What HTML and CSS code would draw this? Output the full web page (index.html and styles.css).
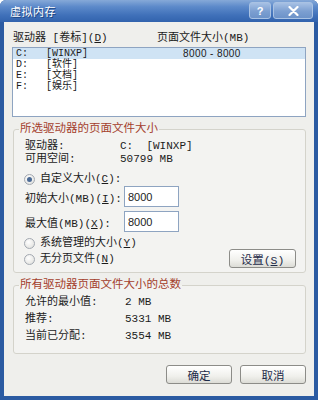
FILE: index.html
```html
<!DOCTYPE html>
<html lang="zh-CN">
  <head>
    <meta charset="UTF-8" />
    <title>虚拟内存</title>
    <link rel="stylesheet" href="styles.css">
  </head>
  <body>
    <div class="window">
      <div class="titlebar">
        <span class="title">虚拟内存</span>
        <div class="tb-buttons">
          <span class="tb-btn help">?</span>
          <span class="tb-btn close">
            <svg width="11" height="10" viewBox="0 0 11 10"><path d="M1.5 1 L9.5 9 M9.5 1 L1.5 9" stroke="#fff" stroke-width="2.2" stroke-linecap="round" /></svg>
          </span>
        </div>
      </div>

      <div class="content">
        <div class="list-head">
          <span class="col-drive">驱动器 [卷标](<u>D</u>)</span>
          <span class="col-size">页面文件大小(MB)</span>
        </div>

        <ul class="drive-list">
          <li class="selected"><span class="letter">C:</span><span class="label">[WINXP]</span><span class="size">8000 - 8000</span></li>
          <li><span class="letter">D:</span><span class="label">[软件]</span><span class="size"></span></li>
          <li><span class="letter">E:</span><span class="label">[文档]</span><span class="size"></span></li>
          <li><span class="letter">F:</span><span class="label">[娱乐]</span><span class="size"></span></li>
        </ul>

        <fieldset class="group group-selected">
          <legend>所选驱动器的页面文件大小</legend>
          <div class="info-row"><span class="key">驱动器:</span><span class="val">C:&nbsp;&nbsp;[WINXP]</span></div>
          <div class="info-row"><span class="key">可用空间:</span><span class="val">50799 MB</span></div>

          <div class="radio-row first-radio"><span class="radio checked"></span>自定义大小(<u>C</u>):</div>
          <div class="field-row"><span class="key">初始大小(MB)(<u>I</u>):</span><input class="num" type="text" value="8000"></div>
          <div class="field-row"><span class="key">最大值(MB)(<u>X</u>):</span><input class="num" type="text" value="8000"></div>

          <div class="radio-row sys-radio"><span class="radio"></span>系统管理的大小(<u>Y</u>)</div>
          <div class="last-row">
            <div class="radio-row"><span class="radio"></span>无分页文件(<u>N</u>)</div>
            <button class="btn btn-set">设置(<u>S</u>)</button>
          </div>
        </fieldset>

        <fieldset class="group group-total">
          <legend>所有驱动器页面文件大小的总数</legend>
          <div class="total-row"><span class="key">允许的最小值:</span><span class="val">2 MB</span></div>
          <div class="total-row"><span class="key">推荐:</span><span class="val">5331 MB</span></div>
          <div class="total-row"><span class="key">当前已分配:</span><span class="val">3554 MB</span></div>
        </fieldset>

        <div class="actions">
          <button class="btn">确定</button>
          <button class="btn">取消</button>
        </div>
      </div>
    </div>
  </body>
</html>
```

FILE: styles.css
```css
body {
  margin: 0;
  font-family: "Liberation Mono", "Noto Sans CJK SC", monospace;
  font-size: 11px;
  color: #1b1b1b;
  background: #ffffff;
}

.window {
  width: 318px;
  height: 400px;
  box-sizing: border-box;
  background: #2b5ba2;
  border-radius: 6px 6px 0 0;
  padding: 0 4px 4px 4px;
  display: flex;
  flex-direction: column;
}

.titlebar {
  height: 22px;
  margin: 0 -4px;
  padding: 0 5px 0 10px;
  display: flex;
  align-items: center;
  justify-content: space-between;
  border-radius: 6px 6px 0 0;
  background: linear-gradient(#86a9d8 0%, #5d8aca 30%, #3f70b9 70%, #3263ad 100%);
}

.title {
  color: #fff;
  font-size: 11px;
  letter-spacing: 0.5px;
  text-shadow: 1px 1px 0 #1d4583;
}

.tb-buttons {
  display: flex;
  gap: 2px;
  align-self: flex-start;
  margin-top: 2px;
}

.tb-btn {
  height: 15px;
  display: flex;
  align-items: center;
  justify-content: center;
  border: 1px solid #a9c2e3;
  border-radius: 3px;
  background: linear-gradient(#a6c0e4, #7c9fd1 55%, #6d93c9);
  color: #fff;
  font-family: "Liberation Sans", sans-serif;
  font-weight: bold;
  font-size: 11px;
}

.help {
  width: 20px;
}

.close {
  width: 38px;
}

.content {
  flex: 1;
  background: #efefec;
  padding: 10px 8px 0 8px;
  display: flex;
  flex-direction: column;
}

u {
  text-decoration: underline;
}

.list-head {
  display: flex;
  line-height: 12px;
  padding-left: 1px;
}

.col-drive {
  width: 144px;
}

.drive-list {
  list-style: none;
  margin: 3px 0 0 0;
  padding: 0;
  height: 70px;
  box-sizing: border-box;
  border: 1px solid #8ea4c1;
  background: #fff;
  font-size: 10px;
}

.drive-list li {
  display: flex;
  height: 11px;
  line-height: 11px;
  padding-left: 3px;
}

.drive-list li.selected {
  background: #cfe3f4;
}

.letter {
  width: 30px;
}

.label {
  width: 111px;
}

.size {
  padding-left: 26px;
  font-family: "Liberation Sans", sans-serif;
  letter-spacing: 0.4px;
}

.group {
  margin: 5px 0 0 1px;
  padding: 0 9px 0 11px;
  border: 1px solid #d4d3cb;
  border-radius: 3px;
  background: #f3f3f1;
}

.group legend {
  margin-left: -6px;
  padding: 0 1px;
  line-height: 14px;
  font-size: 11.5px;
  color: #a4402c;
}

.info-row,
.total-row {
  display: flex;
}

.info-row {
  line-height: 13px;
}

.info-row:first-of-type {
  margin-top: 4px;
}

.key {
  width: 95px;
}

.radio-row {
  display: flex;
  align-items: center;
  line-height: 14px;
  margin-left: -1px;
}

.first-radio {
  margin-top: 6px;
}

.radio {
  width: 11px;
  height: 11px;
  box-sizing: border-box;
  margin-right: 5px;
  border: 1px solid #a3a9b1;
  border-radius: 50%;
  background: radial-gradient(circle at 40% 35%, #ffffff, #dcdcd8);
  position: relative;
}

.radio.checked::after {
  content: "";
  position: absolute;
  left: 2px;
  top: 2px;
  width: 5px;
  height: 5px;
  border-radius: 50%;
  background: #4b6a95;
}

.field-row {
  display: flex;
  align-items: center;
  height: 21px;
}

.field-row + .field-row {
  margin-top: 4px;
}

.field-row .key {
  width: 99px;
}

.num {
  width: 55px;
  height: 21px;
  box-sizing: border-box;
  border: 1px solid #8ea4c1;
  padding: 0 3px;
  font-family: "Liberation Sans", sans-serif;
  font-size: 11px;
  color: #1b1b1b;
  background: #fff;
}

.sys-radio {
  margin-top: 4px;
}

.last-row {
  display: flex;
  align-items: center;
  justify-content: space-between;
  margin-bottom: 4px;
}

.btn {
  width: 66px;
  height: 19px;
  padding: 0;
  border: 1px solid #8c8c88;
  border-radius: 3px;
  background: linear-gradient(#ffffff, #f0f0ec 60%, #dcdcd6);
  font-family: "Liberation Mono", "Noto Sans CJK SC", monospace;
  font-size: 11.5px;
  color: #1d2a48;
}

.btn-set {
  width: 67px;
  margin-top: -1px;
}

.group-total {
  padding-bottom: 8px;
}

.total-row {
  line-height: 17px;
}

.total-row:first-of-type {
  margin-top: 2px;
}

.total-row .key {
  width: 100px;
}

.actions {
  display: flex;
  justify-content: flex-end;
  gap: 8px;
  margin-top: 11px;
}
```
